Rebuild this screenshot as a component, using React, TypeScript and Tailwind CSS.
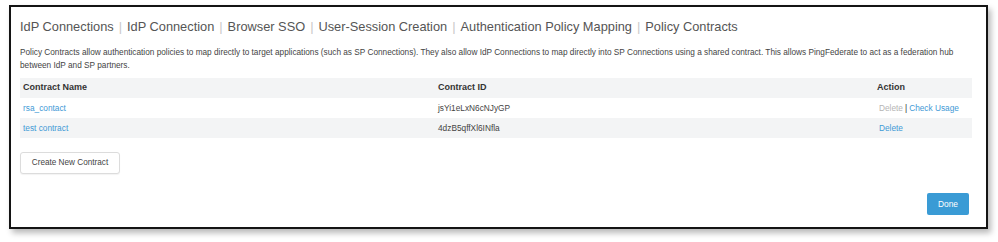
import React from 'react';

const crumbs = ['IdP Connections', 'IdP Connection', 'Browser SSO', 'User-Session Creation', 'Authentication Policy Mapping', 'Policy Contracts'];

const rows = [
  { name: 'rsa_contact', id: 'jsYi1eLxN6cNJyGP', inUse: true },
  { name: 'test contract', id: '4dzB5qffXl6INfla', inUse: false },
];

export default function App() {
  return (
    <div className="w-[998px] h-[242px] bg-white pt-[5px] pl-[9px]" style={{ fontFamily: '"Liberation Sans", Arial, sans-serif' }}>
      <div className="w-[979px] h-[224px] border-[2px] border-[#141414] bg-white shadow-[3px_4px_6px_rgba(0,0,0,0.28)] pl-[9px] pr-[14px] pt-[11px] flex flex-col">
        <h1 className="flex items-center text-[12.8px] leading-[17px] text-[#555]">
          {crumbs.map((c, i) => (
            <span key={c} className="flex items-center">
              {i > 0 && <span className="text-[#c8c8c8] px-[5px]">|</span>}
              {c}
            </span>
          ))}
        </h1>
        <p className="mt-[11px] text-[8.25px] leading-[13px] text-[#444]">
          Policy Contracts allow authentication policies to map directly to target applications (such as SP Connections). They also allow IdP Connections to map directly into SP Connections using a shared contract. This allows PingFederate to act as a federation hub between IdP and SP partners.
        </p>
        <div className="mt-[6px] text-[8.3px]">
          <div className="flex items-center h-[20px] bg-[#f3f4f5] font-bold text-[9px] text-[#333]">
            <div className="w-[418px] pl-[3px]">Contract Name</div>
            <div className="w-[439px]">Contract ID</div>
            <div>Action</div>
          </div>
          {rows.map((r, i) => (
            <div key={r.id} className={`flex items-center h-[20px] ${i % 2 ? 'bg-[#f3f4f5]' : 'bg-white'}`}>
              <div className="w-[418px] pl-[3px] text-[#3f9ad6]">{r.name}</div>
              <div className="w-[441px] text-[#444]">{r.id}</div>
              <div className="flex items-center">
                {r.inUse ? (
                  <>
                    <span className="text-[#b5b5b5]">Delete</span>
                    <span className="text-[#333] px-[2px]">|</span>
                    <span className="text-[#3f9ad6]">Check Usage</span>
                  </>
                ) : (
                  <span className="text-[#3f9ad6]">Delete</span>
                )}
              </div>
            </div>
          ))}
        </div>
        <button className="mt-[14px] w-[100px] h-[22px] border border-[#dcdcdc] rounded-[3px] bg-white text-[8.2px] text-[#444] shadow-[0_1px_1px_rgba(0,0,0,0.05)]">
          Create New Contract
        </button>
        <div className="flex justify-end mt-[19px] pr-[3px]">
          <button className="w-[42px] h-[22px] rounded-[2px] bg-[#3a9bd5] text-white text-[8.4px]">Done</button>
        </div>
      </div>
    </div>
  );
}
